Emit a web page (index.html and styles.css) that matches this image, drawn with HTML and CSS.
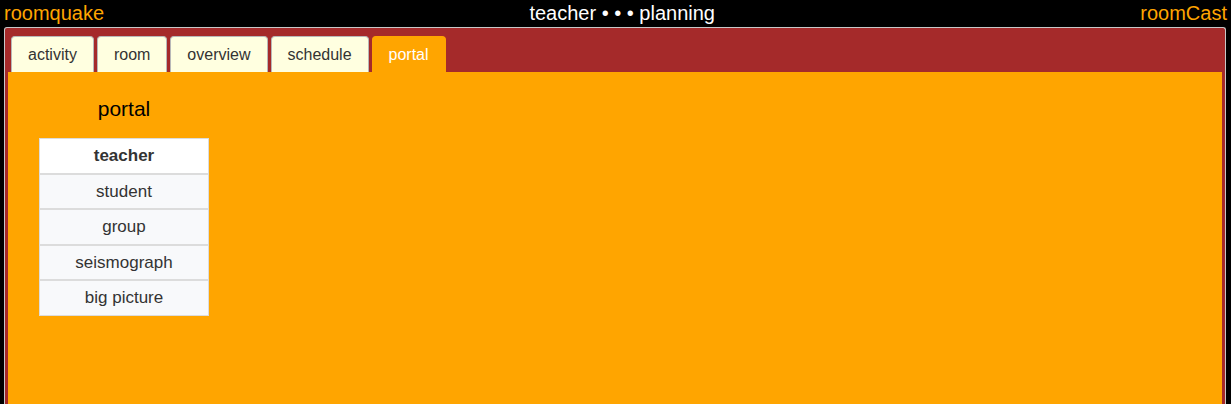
FILE: index.html
```html
<!DOCTYPE html>
<html>
<head>
<meta charset="utf-8">
<link rel="stylesheet" href="styles.css">
</head>
<body>
<header class="topbar">
  <span class="brand">roomquake</span>
  <span class="title">teacher &bull; &bull; &bull; planning</span>
  <span class="brand">roomCast</span>
</header>
<div class="panel">
  <nav class="tabs">
    <div class="tab">activity</div>
    <div class="tab">room</div>
    <div class="tab">overview</div>
    <div class="tab">schedule</div>
    <div class="tab active">portal</div>
  </nav>
  <main class="content">
    <section class="portal">
      <h2 class="heading">portal</h2>
      <ul class="list">
        <li class="item first">teacher</li>
        <li class="item">student</li>
        <li class="item">group</li>
        <li class="item">seismograph</li>
        <li class="item">big picture</li>
      </ul>
    </section>
  </main>
</div>
</body>
</html>
```
FILE: styles.css
```css
html, body {
  margin: 0;
  padding: 0;
  background: #000;
  font-family: "Liberation Sans", Arial, sans-serif;
  height: 404px;
  overflow: hidden;
}
.topbar {
  height: 27px;
  display: flex;
  justify-content: space-between;
  align-items: center;
  padding: 0 4px;
  font-size: 20px;
  line-height: 27px;
}
.brand { color: #ffa500; }
.title { color: #fff; }
.panel {
  margin-left: 4px;
  width: 1220px;
  height: 377px;
  background: #a52a2a;
  border: 1px solid #c8c8c8;
  border-bottom: none;
  border-radius: 3px 3px 0 0;
  display: flex;
  flex-direction: column;
}
.tabs {
  display: flex;
  gap: 3px;
  padding: 8px 6px 0 6px;
  height: 36px;
}
.tab {
  height: 36px;
  box-sizing: border-box;
  padding: 0 16px;
  background: #ffffe0;
  border: 1px solid #b8b8b8;
  border-bottom: none;
  border-radius: 4px 4px 0 0;
  color: #333;
  font-size: 16px;
  line-height: 36px;
}
.tab.active {
  background: #ffa500;
  border-color: #ffa500;
  color: #fff;
}
.content {
  flex: 1;
  margin: 0 3px;
  background: #ffa500;
}
.portal {
  width: 170px;
  margin-left: 31px;
  padding-top: 25px;
}
.heading {
  margin: 0 0 17px 0;
  text-align: center;
  font-weight: normal;
  font-size: 21px;
  line-height: 24px;
  color: #000;
}
.list {
  list-style: none;
  margin: 0;
  padding: 0;
}
.item {
  height: 35.5px;
  box-sizing: border-box;
  border: 1px solid #dcdcdc;
  background: #f8f9fb;
  color: #333;
  font-size: 17px;
  text-align: center;
  line-height: 33px;
}
.item.first {
  background: #fff;
  font-weight: bold;
}
```
